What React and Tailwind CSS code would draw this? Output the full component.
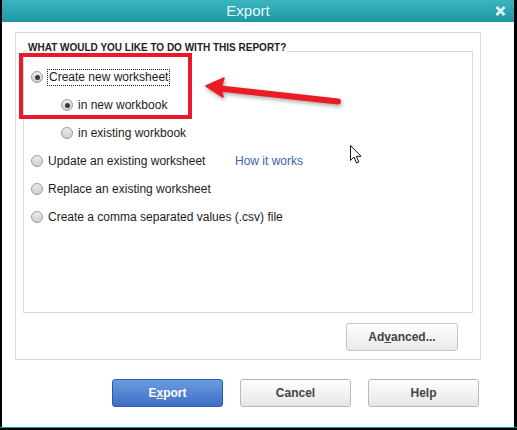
import React from 'react';

const font = { fontFamily: '"Liberation Sans", Arial, sans-serif' };

function Radio({ checked }) {
  return (
    <span className="flex h-[12px] w-[12px] shrink-0 items-center justify-center rounded-full border border-[#9a9a9a] bg-gradient-to-b from-[#ececec] to-[#cfcfcf]">
      {checked && <span className="h-[5px] w-[5px] rounded-full bg-[#3a3a3a]" />}
    </span>
  );
}

function Option({ checked, indent, focus, children, extra }) {
  return (
    <div className={`flex h-[28px] items-center ${indent ? 'pl-[37px]' : 'pl-[7px]'}`}>
      <Radio checked={checked} />
      {focus ? (
        <span className="ml-[4px] border border-dotted border-[#222] px-[1px] leading-[15px]">{children}</span>
      ) : (
        <span className={`ml-[5px] ${extra ? 'w-[187px]' : ''}`}>{children}</span>
      )}
      {extra}
    </div>
  );
}

function Button({ primary, children }) {
  return (
    <button
      className={`flex h-[28px] w-[111px] items-center justify-center rounded-[3px] border text-[12px] font-bold ${
        primary
          ? 'border-[#2c5aa8] bg-gradient-to-b from-[#6a9be0] to-[#3f6fc4] text-white'
          : 'border-[#b9b9b9] bg-gradient-to-b from-[#ffffff] to-[#e6e6e6] text-[#444]'
      }`}
    >
      {children}
    </button>
  );
}

export default function App() {
  return (
    <div className="relative h-[430px] w-[517px] overflow-hidden bg-black" style={font}>
      <div className="flex h-[427px] flex-col border-l-2 border-r-[3px] border-black bg-white">
        {/* title bar */}
        <div className="relative flex h-[22px] shrink-0 items-center justify-center bg-gradient-to-b from-[#3ab4bf] to-[#1f98a6] pr-[20px] text-[15px] text-[#e6f6f7]">
          Export
          <svg className="absolute right-[8px] top-[6px]" width="11" height="10" viewBox="0 0 11 10">
            <path d="M1.5 1 L9.5 9 M9.5 1 L1.5 9" stroke="#e4f1f2" strokeWidth="2.6" />
          </svg>
        </div>

        {/* outer group */}
        <div className="ml-[13px] mt-[10px] flex h-[328px] w-[466px] flex-col border border-[#d9d9d9]">
          <div className="relative ml-[7px] mt-[18px] h-[262px] w-[450px] border border-[#d9d9d9] pt-[11px] text-[12px] text-[#1c1c1c]">
            <span className="absolute left-[3px] top-[-10px] bg-white px-[1px] text-[10px] font-bold leading-[12px] text-[#222]">
              WHAT WOULD YOU LIKE TO DO WITH THIS REPORT?
            </span>
            <Option checked focus>Create new worksheet</Option>
            <Option checked indent>in new workbook</Option>
            <Option indent>in existing workbook</Option>
            <Option extra={<span className="text-[#3a64a8]">How it works</span>}>Update an existing worksheet</Option>
            <Option>Replace an existing worksheet</Option>
            <Option>Create a comma separated values (.csv) file</Option>
          </div>
          <div className="mr-[22px] mt-[10px] flex justify-end">
            <button className="flex h-[28px] w-[112px] items-center justify-center rounded-[3px] border border-[#c4c4c4] bg-gradient-to-b from-[#ffffff] to-[#e9e9e9] text-[12px] font-bold text-[#444]">
              Ad<span className="underline">v</span>anced...
            </button>
          </div>
        </div>

        {/* bottom buttons */}
        <div className="ml-[110px] mt-[19px] flex gap-[17px]">
          <Button primary>
            E<span className="underline">x</span>port
          </Button>
          <Button>Cancel</Button>
          <Button>Help</Button>
        </div>
      </div>
      <div className="h-[1px] bg-[#1f8f99]" />

      {/* annotation: red box */}
      <div className="absolute left-[19px] top-[53px] h-[66px] w-[173px] border-[4px] border-[#e8192c]" />

      {/* annotation: red arrow */}
      <svg className="absolute left-0 top-0" width="517" height="430" style={{ filter: 'drop-shadow(1px 2px 2px rgba(0,0,0,0.35))' }}>
        <path d="M220 88.5 L338 101.5" stroke="#ec1c24" strokeWidth="6" strokeLinecap="round" />
        <path d="M206 86 L224 78 L221 88 L223 97 Z" fill="#ec1c24" stroke="#ec1c24" strokeWidth="1.5" strokeLinejoin="round" />
      </svg>

      {/* mouse cursor */}
      <svg className="absolute left-[350px] top-[145px]" width="13" height="20" viewBox="0 0 13 20">
        <path d="M0.5 0.5 L0.5 15.5 L4 12 L6.5 18 L8.8 17 L6.4 11.3 L11 11.3 Z" fill="white" stroke="#111" strokeWidth="1" strokeLinejoin="round" />
      </svg>
    </div>
  );
}
